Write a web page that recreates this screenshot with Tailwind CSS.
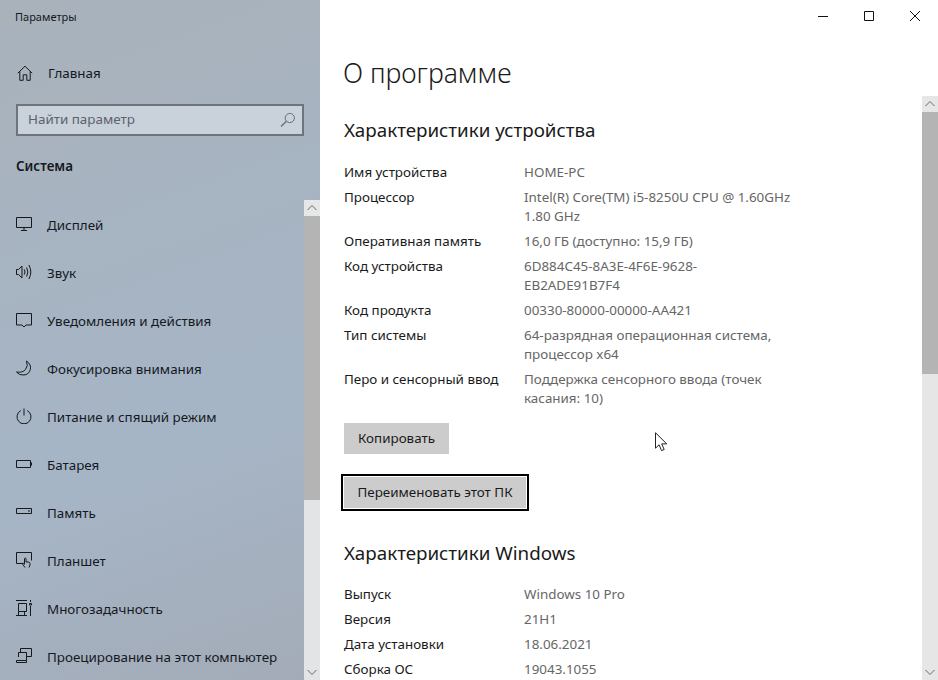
<!DOCTYPE html>
<html lang="ru">
  <head>
    <meta charset="UTF-8" />
    <title>Параметры</title>
    <script src="https://cdn.jsdelivr.net/npm/@tailwindcss/browser@4"></script>
  </head>
  <body class="overflow-hidden bg-white font-['Noto_Sans',sans-serif] text-[#1a1a1a]">
    <div class="flex h-[680px] w-[938px]">
      <!-- sidebar -->
      <aside class="flex h-full w-[320px] flex-col bg-[linear-gradient(160deg,#a9b2bb_0%,#a6b4c3_45%,#a6b5c6_65%,#a3abb7_100%)] text-[13.4px] text-[#15191e]">
        <div class="flex h-[34px] items-center pl-[15px] text-[11px]">Параметры</div>
        <div class="mt-[15px] flex h-[48px] items-center pl-[17px]">
          <svg class="h-[16px] w-[16px]" viewBox="0 0 16 16" fill="none" stroke="#15191e" stroke-width="1"><path d="M.8 8.2 8 1.2l7.2 7M2.8 6.5v8.8h3.4V9.8h3.6v5.5h3.4V6.5" /></svg>
          <span class="ml-[15px]">Главная</span>
        </div>
        <div class="mx-[16px] mt-[7px] flex h-[32px] items-center justify-between border-2 border-[#6d747c] bg-[#c9d1da] pr-[6px] pl-[10px] text-[#5b626a]">
          <span class="pb-[2px]">Найти параметр</span>
          <svg class="h-[16px] w-[16px]" viewBox="0 0 16 16" fill="none" stroke="#6a7077" stroke-width="1"><circle cx="9.8" cy="6" r="4.6" /><path d="M6.4 9.2 1 14.6" stroke-width="1.4" /></svg>
        </div>
        <div class="mt-[20px] pl-[16px] leading-[20px] font-semibold">Система</div>
        <div class="mt-[24px] flex min-h-0 flex-1">
          <nav class="flex-1">
            <div class="flex h-[48px] items-center pl-[16px]">
              <svg class="h-[16px] w-[16px]" viewBox="0 0 16 16" fill="none" stroke="#15191e"><path d="M.5 1.5h15v10H.5zM8 11.5v3M5 14.5h6" /></svg>
              <span class="ml-[15px] pt-[2px]">Дисплей</span>
            </div>
            <div class="flex h-[48px] items-center pl-[16px]">
              <svg class="h-[16px] w-[16px]" viewBox="0 0 16 16" fill="none" stroke="#15191e"><path d="M.5 5.500h2l3.500-3.500v12l-3.500-3.500h-2zM8.300 5.500q1.400 2.500 0 5M10.600 3.500q2.600 4.500 0 9M12.900 1q3.800 7 0 14" /></svg>
              <span class="ml-[15px] pt-[2px]">Звук</span>
            </div>
            <div class="flex h-[48px] items-center pl-[16px]">
              <svg class="h-[16px] w-[16px]" viewBox="0 0 16 16" fill="none" stroke="#15191e"><path d="M.5 1.5h15v11.500h-5.500l-2 2-2-2H.5z" /></svg>
              <span class="ml-[15px] pt-[2px]">Уведомления и действия</span>
            </div>
            <div class="flex h-[48px] items-center pl-[16px]">
              <svg class="h-[16px] w-[16px]" viewBox="0 0 16 16" fill="none" stroke="#15191e"><path d="M10.500 1q5 3.500 3.800 8.500T8 15q-5 .5-7.500-3 6 1 9-2.500T10.500 1z" /></svg>
              <span class="ml-[15px] pt-[2px]">Фокусировка внимания</span>
            </div>
            <div class="flex h-[48px] items-center pl-[16px]">
              <svg class="h-[16px] w-[16px]" viewBox="0 0 16 16" fill="none" stroke="#15191e"><path d="M4.800 2.600a7 7 0 1 0 6.400 0M8 .5v7" /></svg>
              <span class="ml-[15px] pt-[2px]">Питание и спящий режим</span>
            </div>
            <div class="flex h-[48px] items-center pl-[16px]">
              <svg class="h-[16px] w-[16px]" viewBox="0 0 16 16" fill="none" stroke="#15191e"><path d="M.5 4.500h14v7H.5z" /><path d="M15.500 6.500v3" /></svg>
              <span class="ml-[15px] pt-[2px]">Батарея</span>
            </div>
            <div class="flex h-[48px] items-center pl-[16px]">
              <svg class="h-[16px] w-[16px]" viewBox="0 0 16 16" fill="none" stroke="#15191e"><path d="M.5 4.500h15v5H.5zM12 7h2" /></svg>
              <span class="ml-[15px] pt-[2px]">Память</span>
            </div>
            <div class="flex h-[48px] items-center pl-[16px]">
              <svg class="h-[16px] w-[16px]" viewBox="0 0 16 16" fill="none" stroke="#15191e"><path d="M7 11.500H.5v-11h15v8M9 15.500l-2.500-3.500q-.5-1 .8-.8l1.200 1V6.500q.8-1.200 1.500 0V10h2.500q1.500.2 1.500 1.500v1.500l-1 2.500" /></svg>
              <span class="ml-[15px] pt-[2px]">Планшет</span>
            </div>
            <div class="flex h-[48px] items-center pl-[16px]">
              <svg class="h-[16px] w-[16px]" viewBox="0 0 16 16" fill="none" stroke="#15191e"><path d="M0 .5h11M0 15.500h11M2.500 3.500h8v8h-8zM2.500 11.500v4M8.500 11.500v4M14.500 0v2M14.500 6v10" /><path d="M13.500 3.500h2v1.500h-2z" /></svg>
              <span class="ml-[15px] pt-[2px]">Многозадачность</span>
            </div>
            <div class="flex h-[48px] items-center pl-[16px]">
              <svg class="h-[16px] w-[16px]" viewBox="0 0 16 16" fill="none" stroke="#15191e"><path d="M4.500 4V.5h11v8h-5M2.500 9V4.500h8v8M.5 12.500h10v2H.5z" /></svg>
              <span class="ml-[15px] pt-[2px]">Проецирование на этот компьютер</span>
            </div>
          </nav>
          <div class="flex w-[16px] flex-col bg-[#e3e4e5]">
            <div class="flex h-[16px] items-center justify-center bg-[#e6e7e8]">
              <svg class="h-[8px] w-[10px]" viewBox="0 0 10 8" fill="none" stroke="#6b6b6b"><path d="M.5 6 5 1.500 9.500 6" /></svg>
            </div>
            <div class="h-[284px] bg-[#b4b4b4]"></div>
            <div class="flex-1"></div>
            <div class="flex h-[16px] items-center justify-center">
              <svg class="h-[8px] w-[10px]" viewBox="0 0 10 8" fill="none" stroke="#6b6b6b"><path d="M.5 2 5 6.500 9.500 2" /></svg>
            </div>
          </div>
        </div>
      </aside>

      <!-- main -->
      <main class="flex h-full min-w-0 flex-1 flex-col text-[13.4px]">
        <div class="flex h-[32px] shrink-0 justify-end">
          <div class="flex w-[46px] items-center justify-center">
            <svg class="h-[10px] w-[10px]" viewBox="0 0 10 10" stroke="#111"><path d="M0 5.500h10" /></svg>
          </div>
          <div class="flex w-[46px] items-center justify-center">
            <svg class="h-[10px] w-[10px]" viewBox="0 0 10 10" fill="none" stroke="#111"><path d="M.5.500h9v9h-9z" /></svg>
          </div>
          <div class="flex w-[46px] items-center justify-center">
            <svg class="h-[10px] w-[10px]" viewBox="0 0 10 10" stroke="#111"><path d="m0 0 10 10M10 0 0 10" /></svg>
          </div>
        </div>
        <h1 class="h-[64px] shrink-0 pt-[21px] pl-[23px] text-[26.6px] leading-[40px] font-light">О программе</h1>
        <div class="flex min-h-0 flex-1">
          <div class="relative flex-1 overflow-hidden pl-[24px]">
            <h2 class="mt-[21px] text-[18.800px] leading-[26px]">Характеристики устройства</h2>
            <dl class="mt-[20px] grid grid-cols-[180px_1fr] gap-y-[6px] leading-[19px]">
              <dt>Имя устройства</dt><dd class="text-[#666666]">HOME-PC</dd>
              <dt>Процессор</dt><dd class="text-[#666666]">Intel(R) Core(TM) i5-8250U CPU @ 1.60GHz<br />1.80 GHz</dd>
              <dt>Оперативная память</dt><dd class="text-[#666666]">16,0 ГБ (доступно: 15,9 ГБ)</dd>
              <dt>Код устройства</dt><dd class="text-[#666666]">6D884C45-8A3E-4F6E-9628-<br />EB2ADE91B7F4</dd>
              <dt>Код продукта</dt><dd class="text-[#666666]">00330-80000-00000-AA421</dd>
              <dt>Тип системы</dt><dd class="text-[#666666]">64-разрядная операционная система,<br />процессор x64</dd>
              <dt>Перо и сенсорный ввод</dt><dd class="text-[#666666]">Поддержка сенсорного ввода (точек<br />касания: 10)</dd>
            </dl>
            <button class="mt-[15px] block h-[31px] w-[105px] bg-[#cccccc]">Копировать</button>
            <button class="mt-[23px] block h-[31px] w-[182px] bg-[#cccccc] outline-2 outline-offset-1 outline-black">Переименовать этот ПК</button>
            <h2 class="mt-[32px] text-[18.800px] leading-[26px]">Характеристики Windows</h2>
            <dl class="mt-[19px] grid grid-cols-[180px_1fr] gap-y-[6px] leading-[19px]">
              <dt>Выпуск</dt><dd class="text-[#666666]">Windows 10 Pro</dd>
              <dt>Версия</dt><dd class="text-[#666666]">21H1</dd>
              <dt>Дата установки</dt><dd class="text-[#666666]">18.06.2021</dd>
              <dt>Сборка ОС</dt><dd class="text-[#666666]">19043.1055</dd>
            </dl>
            <!-- mouse pointer caught in the screenshot -->
            <svg class="absolute top-[336px] left-[335px] h-[20px] w-[13px]" viewBox="0 0 13 20" fill="#fff" stroke="#222"><path d="M.5.700v15.500l3.600-3.400 2.400 5.800 2.700-1.100-2.500-5.600h5z" /></svg>
          </div>
          <div class="flex w-[16px] flex-col bg-[#e6e6e6]">
            <div class="flex h-[16px] items-center justify-center">
              <svg class="h-[8px] w-[10px]" viewBox="0 0 10 8" fill="none" stroke="#6b6b6b"><path d="M.5 6 5 1.500 9.500 6" /></svg>
            </div>
            <div class="h-[262px] bg-[#b4b4b4]"></div>
            <div class="flex-1"></div>
            <div class="flex h-[16px] items-center justify-center">
              <svg class="h-[8px] w-[10px]" viewBox="0 0 10 8" fill="none" stroke="#6b6b6b"><path d="M.5 2 5 6.500 9.500 2" /></svg>
            </div>
          </div>
        </div>
      </main>
    </div>
  </body>
</html>
